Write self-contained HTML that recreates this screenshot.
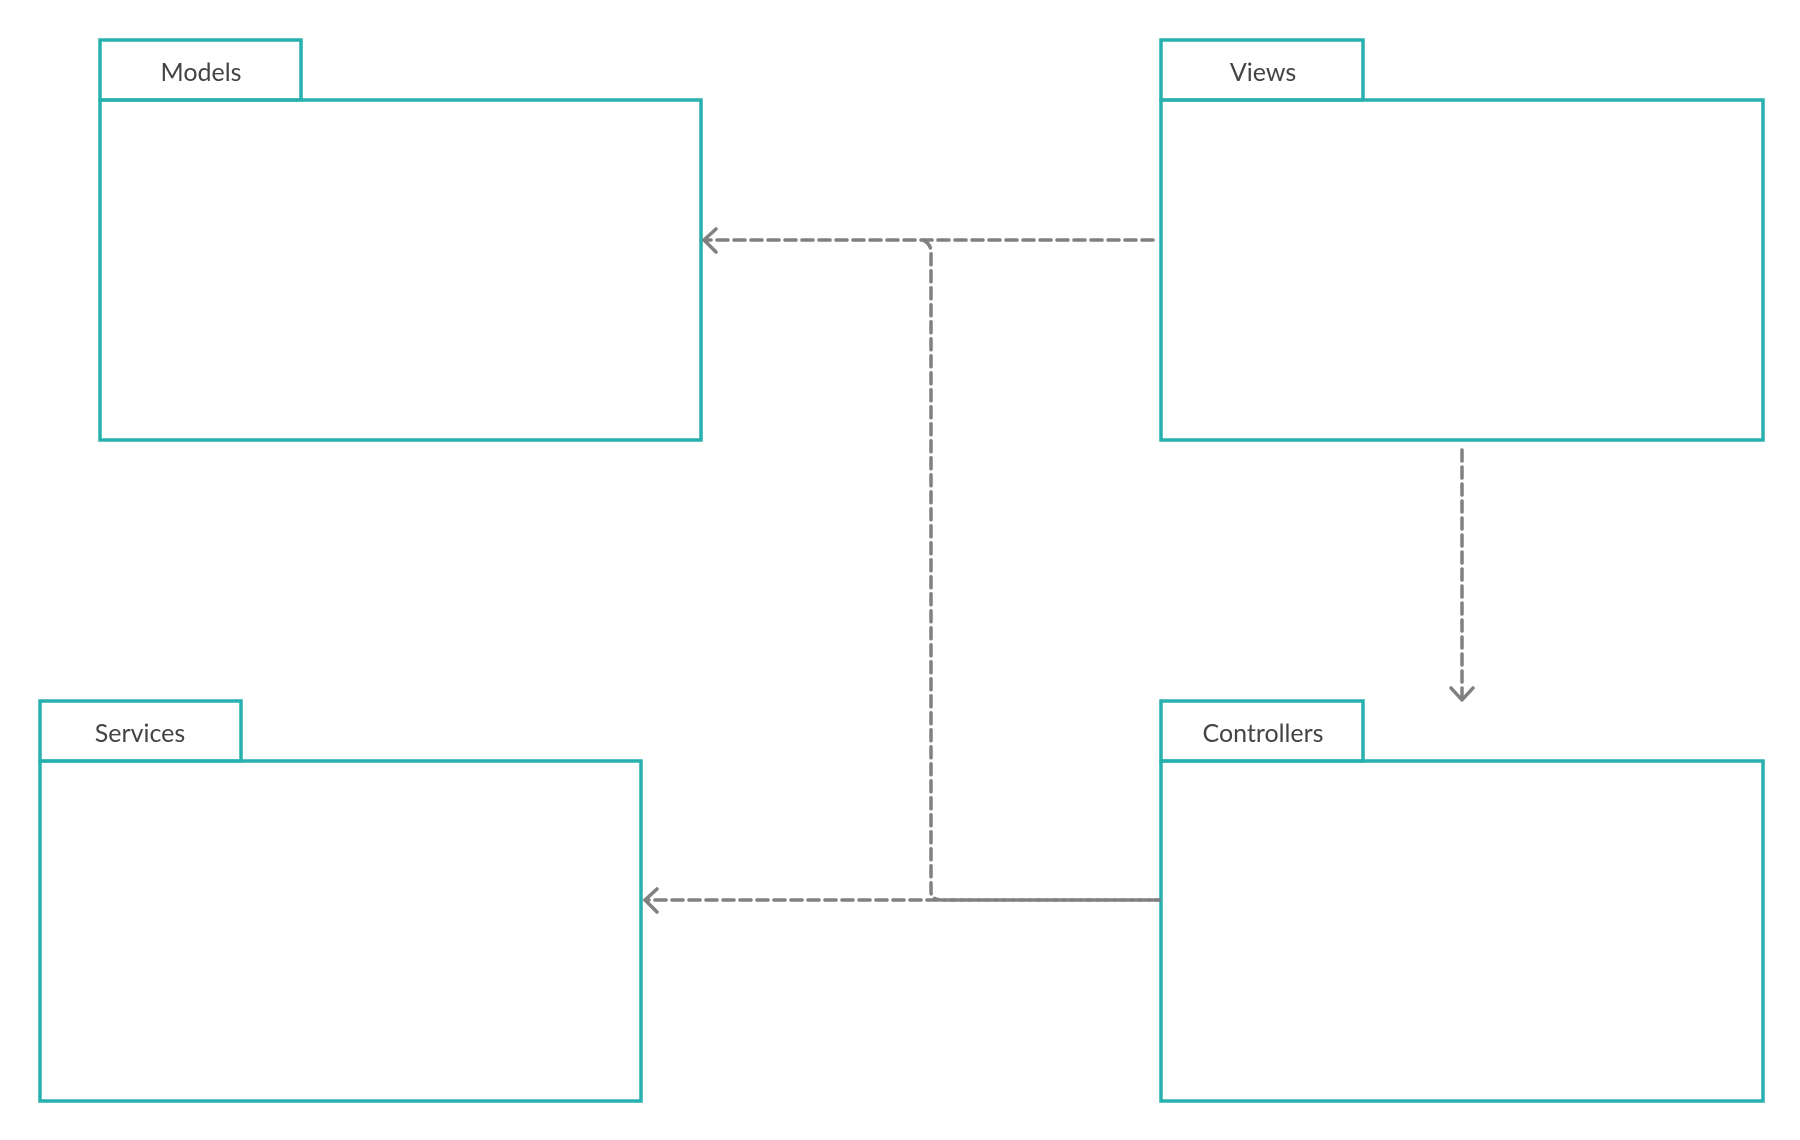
<!DOCTYPE html>
<html><head><style>html,body{margin:0;padding:0;background:#fff}svg{display:block}</style></head>
<body>
<svg width="1800" height="1140" viewBox="0 0 1800 1140" xmlns="http://www.w3.org/2000/svg">
<g fill="none" stroke="#27b0ae" stroke-width="3.5">
<rect x="100" y="40" width="201" height="60"/><rect x="100" y="100" width="601" height="340"/>
<rect x="1161" y="40" width="202" height="60"/><rect x="1161" y="100" width="602" height="340"/>
<rect x="40" y="701" width="201" height="60"/><rect x="40" y="761" width="601" height="340"/>
<rect x="1161" y="701" width="202" height="60"/><rect x="1161" y="761" width="602" height="340"/>
</g>
<g font-family="Lato,'Liberation Sans',sans-serif" font-size="25" fill="#444" text-anchor="middle">
<text x="201" y="81">Models</text>
<text x="1263" y="81">Views</text>
<text x="140" y="742">Services</text>
<text x="1263" y="742">Controllers</text>
</g>
<g fill="none" stroke="#808080" stroke-width="3.5" stroke-dasharray="11 6" stroke-linecap="round">
<path d="M1153 240 H704"/>
<path d="M923 240 Q931 244 931 252 V892 Q931 900 943 900 H1159"/>
<path d="M1159 900 H645"/>
<path d="M1462 450 V698"/>
</g>
<g fill="none" stroke="#808080" stroke-width="3.5" stroke-linecap="round" stroke-linejoin="round">
<path d="M716 229 L704 240 L716 252"/>
<path d="M657 889 L645 900 L657 912"/>
<path d="M1451 688 L1462 700 L1473 688"/>
</g>
</svg>
</body></html>
